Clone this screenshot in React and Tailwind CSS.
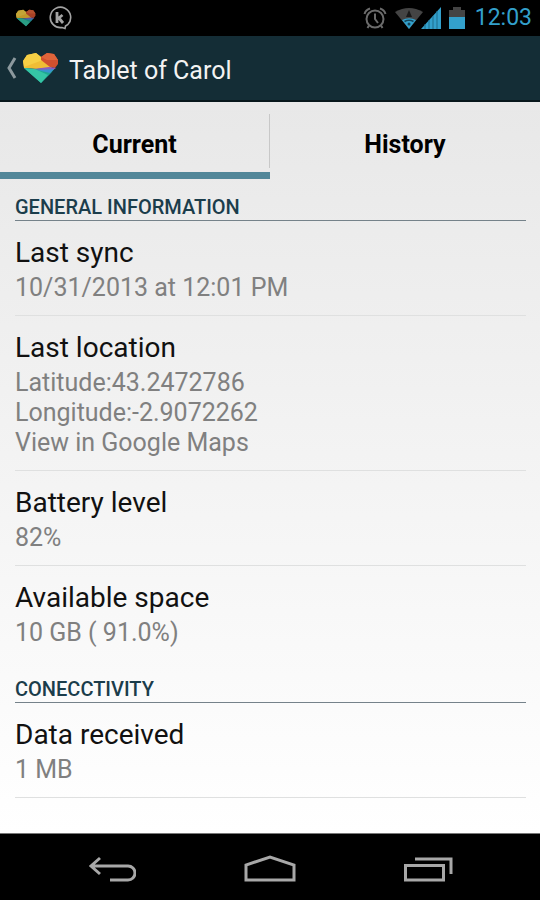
import { useState } from "react";

const sections = [
  {
    title: "GENERAL INFORMATION",
    items: [
      { label: "Last sync", lines: ["10/31/2013 at 12:01 PM"] },
      {
        label: "Last location",
        lines: ["Latitude:43.2472786", "Longitude:-2.9072262"],
        link: "View in Google Maps",
      },
      { label: "Battery level", lines: ["82%"] },
      { label: "Available space", lines: ["10 GB ( 91.0%)"] },
    ],
  },
  {
    title: "CONECCTIVITY",
    items: [{ label: "Data received", lines: ["1 MB"], divider: true }],
  },
];

function HeartLogo({ className }) {
  return (
    <svg viewBox="0 0 36 32" className={className} aria-hidden="true">
      <path d="M0 9 4 3 13 1 18 5 29 16 14 17 1 16Z" fill="#f0bd35" />
      <path d="M0 9 4 3 13 1 18 5 20 8 1 15Z" fill="#f6cf45" />
      <path d="M18 5 24 1 31 2 35 8 35 12 32 16 27 15 18 8Z" fill="#d2502f" />
      <path d="M18 5 24 1 31 2 35 8 24 8Z" fill="#e0643a" />
      <path d="M1 16 12 17 32 16 28 21 18 31Z" fill="#1fa893" />
      <path d="M1 16 12 17 25 23 18 31Z" fill="#35c5a5" />
      <path d="M11 17 26 15 33 16 30 18 20 18Z" fill="#8b5cc0" />
      <path d="M14 18 31 17 27 21Z" fill="#3a93cf" />
    </svg>
  );
}

function StatusBar() {
  return (
    <div className="flex h-9 items-center justify-between bg-black pr-2 pl-4">
      <div className="flex items-center gap-3">
        <HeartLogo className="h-[18px] w-5 opacity-80" />
        <svg viewBox="0 0 24 24" className="h-6 w-6" fill="none" stroke="#a3a3a3" aria-hidden="true">
          <path d="M14 21.500A10.200 10.200 0 1 1 20 18.300L17.500 20 17 22.500Z" strokeWidth="1.600" />
          <path d="M9 6V17M9.500 13 14.500 9M10.500 11.500 15 17" strokeWidth="2.800" />
        </svg>
      </div>
      <div className="flex items-center gap-1">
        <svg viewBox="0 0 24 24" className="mr-1 h-6 w-6" fill="none" stroke="#6b6b6b" strokeWidth="2" aria-hidden="true">
          <circle cx="12" cy="13" r="8.500" />
          <path d="M12 7.500V13L15 17M1.500 8A8 8 0 0 1 7 2.500M22.500 8A8 8 0 0 0 17 2.500M6 19.500 4.500 22M18 19.500 19.500 22" />
        </svg>
        <svg viewBox="0 0 28 22" className="-mr-1.5 h-[22px] w-7" aria-hidden="true">
          <path d="M0 5Q14-3 28 5L14 22Z" fill="#444" />
          <path d="M14 3 17 10H11Z" fill="#191919" />
          <path d="M7 13Q14 9.500 21 13L14 22Z" fill="#33a0cc" />
          <path d="M9.500 14.500Q14 12 18.500 14.500" fill="none" stroke="#12465c" strokeWidth="1.500" />
          <circle cx="14" cy="17" r="1.500" fill="#12465c" />
        </svg>
        <svg viewBox="0 0 20 22" className="mr-1 h-[22px] w-5" aria-hidden="true">
          <path d="M0 22 20 0V22Z" fill="#33a0cc" />
          <path d="M4 17V22M8 13V22M12 9V22M16 4V22" stroke="#1f6d8c" strokeWidth="1" />
        </svg>
        <svg viewBox="0 0 16 22" className="h-[22px] w-4" aria-hidden="true">
          <path d="M0 3H4V0H12V3H16V10H0Z" fill="#444" />
          <path d="M0 10H16V22H0Z" fill="#33a0cc" />
        </svg>
        <span className="ml-1.5 text-[23px] leading-9 text-[#33a0cc]">12:03</span>
      </div>
    </div>
  );
}

function Item({ item, divider }) {
  return (
    <li
      className={
        divider
          ? "border-b border-[#dfe0e0] py-3"
          : "border-b border-transparent py-3"
      }
    >
      <h3 className="text-[28px] leading-10 text-[#111]">{item.label}</h3>
      <div className="text-[25px] leading-[30px] text-[#808080]">
        {item.lines.map((line) => (
          <p key={line}>{line}</p>
        ))}
        {item.link && (
          <a href="#map" className="block">
            {item.link}
          </a>
        )}
      </div>
    </li>
  );
}

function NavBar() {
  return (
    <nav className="grid h-[67px] grid-cols-3 items-center justify-items-center border-t border-[#777] bg-black px-[33px] pt-1">
      <button type="button" aria-label="Back">
        <svg viewBox="0 0 48 30" className="h-[30px] w-12" fill="none" stroke="#a8a8a8" strokeWidth="3">
          <path d="M12 4 3 12 12 20M3 12H40A7 7 0 0 1 40 26H22" />
        </svg>
      </button>
      <button type="button" aria-label="Home">
        <svg viewBox="0 0 52 30" className="h-[30px] w-[52px]" fill="none" stroke="#a8a8a8" strokeWidth="3">
          <path d="M2 26V11L26 3 50 11V26Z" />
        </svg>
      </button>
      <button type="button" aria-label="Recent apps">
        <svg viewBox="0 0 50 30" className="h-[30px] w-[50px]" fill="none" stroke="#a8a8a8" strokeWidth="3">
          <path d="M2.500 11.500H40.500V26H2.500Z" />
          <path d="M12 5H48V20" />
        </svg>
      </button>
    </nav>
  );
}

export default function App() {
  const [tab, setTab] = useState("Current");

  return (
    <div className="flex min-h-screen flex-col bg-black font-['Roboto','Liberation_Sans',sans-serif]">
      <StatusBar />
      <header className="flex h-[66px] items-center border-b-2 border-[#07161b] bg-[#142d36] pl-1.5">
        <button type="button" aria-label="Up" className="flex items-center gap-1.5">
          <svg viewBox="0 0 11 22" className="h-[22px] w-[11px]" fill="none" stroke="#8c999e" strokeWidth="3" aria-hidden="true">
            <path d="M9 1 3 11 9 21" />
          </svg>
          <HeartLogo className="h-8 w-9" />
        </button>
        <h1 className="ml-2.5 pt-1.5 text-[25px] leading-8 text-[#f3f3f3]">Tablet of Carol</h1>
      </header>

      <main className="flex-1 bg-linear-to-b from-[#e8e8e8] to-white">
        <div role="tablist" className="flex h-[77px]">
          {["Current", "History"].map((name) => (
            <button
              key={name}
              type="button"
              role="tab"
              aria-selected={tab === name}
              onClick={() => setTab(name)}
              className={
                tab === name
                  ? "flex flex-1 flex-col border-b-[7px] border-[#528799]"
                  : "flex flex-1 flex-col border-b-[7px] border-transparent"
              }
            >
              <span
                className={
                  name === "Current"
                    ? "mt-3 mb-1 flex w-full flex-1 items-center justify-center border-r border-[#c8c8c8] pt-2 text-[25px] font-bold text-black"
                    : "mt-3 mb-1 flex w-full flex-1 items-center justify-center pt-2 text-[25px] font-bold text-black"
                }
              >
                {name}
              </span>
            </button>
          ))}
        </div>

        <div className="pr-3.5 pl-[15px]">
          {sections.map((section) => (
            <section key={section.title}>
              <h2 className="border-b border-[#75828a] pt-[18px] pb-[3px] text-[20px] leading-5 font-medium text-[#1b3d4b]">
                {section.title}
              </h2>
              <ul>
                {section.items.map((item, i) => (
                  <Item
                    key={item.label}
                    item={item}
                    divider={item.divider || i < section.items.length - 1}
                  />
                ))}
              </ul>
            </section>
          ))}
        </div>
      </main>
      <NavBar />
    </div>
  );
}
